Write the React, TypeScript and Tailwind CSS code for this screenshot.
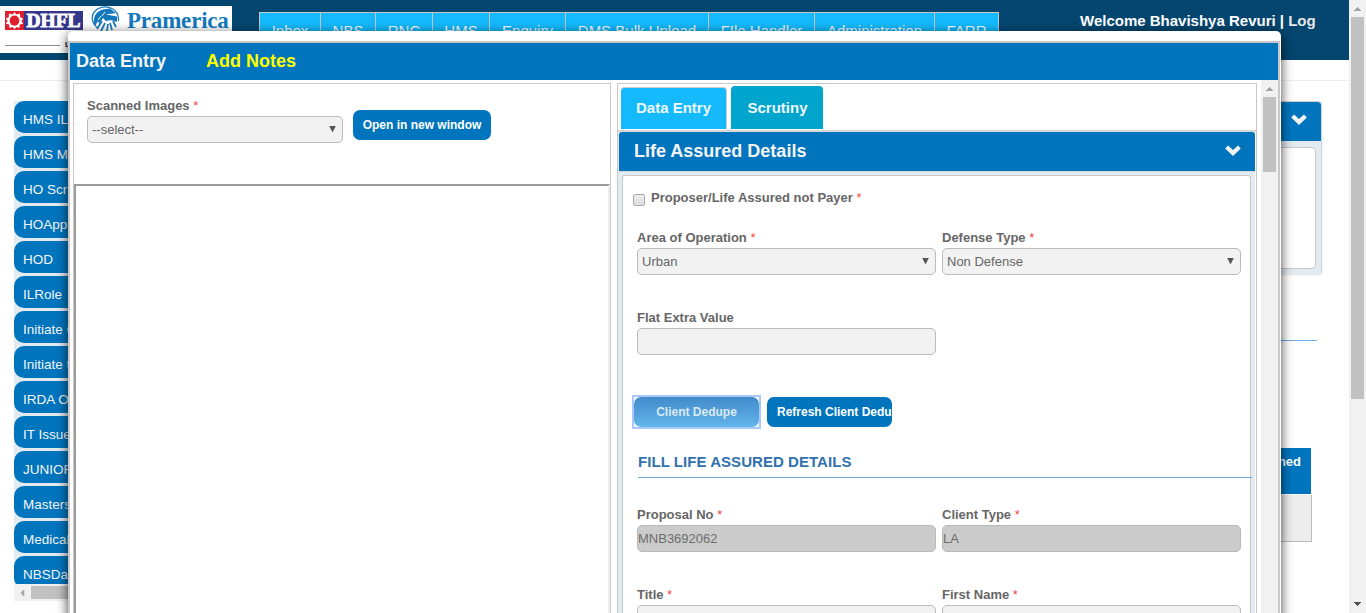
import React from "react";

const navItems = [
  { label: "Inbox", width: "w-[61px]" },
  { label: "NBS", width: "w-[55px]" },
  { label: "RNC", width: "w-[57px]" },
  { label: "HMS", width: "w-[57px]" },
  { label: "Enquiry", width: "w-[76px]" },
  { label: "DMS Bulk Upload", width: "w-[143px]" },
  { label: "FIle Handler", width: "w-[106px]" },
  { label: "Administration", width: "w-[120px]" },
  { label: "FARR", width: "w-[64px]" },
];

const roles = [
  "HMS IL",
  "HMS Maker",
  "HO Scrutiny",
  "HOApprover",
  "HOD",
  "ILRole",
  "Initiate Claim",
  "Initiate task",
  "IRDA Officer",
  "IT Issues",
  "JUNIOR",
  "Masters",
  "Medical",
  "NBSDataEntry",
];

function Chevron() {
  return (
    <svg width="16" height="11" viewBox="0 0 16 11" className="shrink-0" aria-hidden="true">
      <path d="M0.2 3.4 L3 0.4 L8 5 L13 0.4 L15.8 3.4 L8 11 Z" fill="#f4f4f4" />
    </svg>
  );
}

function Arrow({ className }: { className: string }) {
  return (
    <svg width="7" height="4" viewBox="0 0 7 4" className={className} aria-hidden="true">
      <path d="M3 0h1v1h1v1h1v1h1v1H0V3h1V2h1V1h1z" fill="currentColor" />
    </svg>
  );
}

function Logo() {
  return (
    <div className="h-[47px] w-[232px] bg-white pl-[5px]">
      <div className="flex h-[25px]">
        <div className="mt-[5px] flex h-[19px] w-[78px]">
          <svg width="19" height="19" viewBox="0 0 20 19" preserveAspectRatio="none" aria-hidden="true">
            <rect width="20" height="19" fill="#e01f2d" />
            <path
              d="M10 1l2 2.6 3.800-1 .1 3.600 3.300 1.300-1.900 2.300 1.700 3-3.400.7-.6 3.500-3-1.100L10 18.200l-2.100-2.300-3 1.100-.6-3.500-3.400-.7 1.800-3L.8 7.500 4 6.200l.2-3.600L8 3.600z"
              fill="#fff"
            />
            <circle cx="10" cy="9.600" r="5.100" fill="#e01f2d" />
          </svg>
          <svg width="59" height="19" viewBox="0 0 59 19" aria-hidden="true">
            <rect width="59" height="19" fill="#34378b" />
            <text
              x="2.5"
              y="16"
              textLength="54"
              lengthAdjust="spacingAndGlyphs"
              fill="#fff"
              stroke="#fff"
              strokeWidth="0.9"
              className="font-['Liberation_Serif'] text-[19px] font-bold"
            >
              DHFL
            </text>
          </svg>
        </div>
        <svg width="30" height="26" viewBox="0 0 30 26" className="ml-[7px]" aria-hidden="true">
          <path d="M8 22C2 18 0 10 5 5C9 .8 16-.5 22 2.500C26 4.500 28.800 9 28.500 15" fill="none" stroke="#1379bd" strokeWidth="1.200" />
          <path d="M4 17C3 10 7 5 13 3.500L20 2.500L26 7L16 8.500L27 10.500L27 16L21 14L16 15L13 12L9 18L8 15L5 20z" fill="#1379bd" />
          <path d="M12 10l3-4M8 14l3-4" stroke="#fff" strokeWidth="1" />
          <path d="M7 23l5-8M11 25l4-8M17 25l1-7M22 24l-2-7M26 21l-3-6" stroke="#1379bd" strokeWidth="1.700" fill="none" />
        </svg>
        <span className="ml-[7px] mt-px whitespace-nowrap font-['Liberation_Serif'] text-[23px] font-bold leading-[28px] tracking-[-0.2px] text-[#1379bd]">
          Pramerica
        </span>
      </div>
      <div className="mt-[8px] flex items-center">
        <div className="h-px w-[55px] bg-[#8b8b8b]" />
        <span className="ml-[5px] text-[8px] font-bold leading-[12px] text-[#222]">LIFE INSURANCE</span>
      </div>
    </div>
  );
}

function Label({ text, required = true }: { text: string; required?: boolean }) {
  return (
    <div className="h-[21px] whitespace-nowrap text-[13px] font-bold leading-[22px] text-[#666]">
      {text}
      {required && <span className="font-normal text-[#f0483e]"> *</span>}
    </div>
  );
}

function SelectBox({ value }: { value: string }) {
  return (
    <div className="flex h-[27px] items-center justify-between rounded-[5px] border border-[#bbb] bg-[#f2f2f2] pl-1 pr-[6px] text-[13px] text-[#666]">
      <span>{value}</span>
      <svg width="7" height="7" viewBox="0 0 7 7" className="mb-px" aria-hidden="true">
        <path d="M0.200 0h6.600L3.500 6.500z" fill="#555" />
      </svg>
    </div>
  );
}

function TextBox({ value = "", disabled = false }: { value?: string; disabled?: boolean }) {
  return (
    <div
      className={
        disabled
          ? "flex h-[27px] items-center rounded-[5px] border border-[#b9b9b9] bg-[#cbcbcb] text-[13px] text-[#6d6d6d]"
          : "flex h-[27px] items-center rounded-[5px] border border-[#bbb] bg-[#f2f2f2] text-[13px] text-[#666]"
      }
    >
      {value}
    </div>
  );
}

function PageBackground() {
  return (
    <div className="flex h-[613px] w-[1349px] flex-col bg-white">
      <header className="flex h-[60px] shrink-0 bg-[#04466f] pt-[6px]">
        <Logo />
        <nav className="ml-[27px] mt-[6px] flex h-[36px] border-l border-[#c8c8c8]">
          {navItems.map((n) => (
            <div
              key={n.label}
              className={`${n.width} shrink-0 whitespace-nowrap border-r border-t border-[#c8c8c8] bg-[#14bafc] text-center text-[15px] leading-[36px] text-[#eef8fd]`}
            >
              {n.label}
            </div>
          ))}
        </nav>
        <div className="ml-[81px] mt-[6px] whitespace-nowrap text-[15px] font-bold leading-[18px] text-white">
          Welcome Bhavishya Revuri | <span className="text-[#e6e6e6]">Log</span>
        </div>
      </header>
      <div className="h-[21px] shrink-0 border-b border-[#eee]" />
      <div className="flex justify-between pl-[14px] pt-5">
        <aside className="w-[200px]">
          <div className="flex h-[483px] flex-col gap-[3px] overflow-hidden bg-[#e2eaf2]">
            {roles.map((r) => (
              <div
                key={r}
                className="h-8 shrink-0 rounded-[10px] bg-[#0075be] pl-[9px] text-[13.5px] leading-[37px] text-[#f4f4f4]"
              >
                {r}
              </div>
            ))}
          </div>
          <div className="flex h-[17px] items-center bg-[#f1f1f1] pl-[5px]">
            <Arrow className="-rotate-90 text-[#a3a3a3]" />
            <div className="ml-[5px] h-[13px] flex-1 bg-[#c1c1c1]" />
          </div>
        </aside>
        <section className="mr-[27px] w-[80px]">
          <div className="h-[173px] rounded-[4px] border-r border-[#d0d6dc] bg-[#e2eaf2] shadow-sm">
            <div className="flex h-[40px] items-center justify-end rounded-tr-[4px] border-t border-[#d0d0d0] bg-[#0075be] pr-[14px] pb-[5px]">
              <Chevron />
            </div>
            <div className="mr-[5px] mt-[6px] h-[122px] rounded-r-[4px] border border-[#c4c8cc] bg-white" />
          </div>
          <div className="mr-[5px] h-[67px] border-b border-[#6aaee6]" />
          <div className="mr-[11px] mt-[107px] h-[46px] bg-[#0075be] pr-[10px] pt-[6px] text-right text-[13px] font-bold leading-[15px] text-white">
            Assigned
          </div>
          <div className="mr-[10px] mt-px h-[47px] border-b border-r border-[#bbb] bg-[#ededed]" />
        </section>
      </div>
    </div>
  );
}

function DetailsPanel() {
  return (
    <div className="h-[530px] w-[640px] border border-b-0 border-[#c8c8c8] bg-white">
      <div className="flex h-[46px] items-start gap-[4px] pl-[3px] pt-[2px]">
        <div className="mt-px flex h-[42px] w-[106px] items-center justify-center rounded-t-[4px] border-r border-t border-[#ccc] bg-[#14bafc] text-[15px] font-bold text-[#eef8fd]">
          Data Entry
        </div>
        <div className="flex h-[43px] w-[92px] items-center justify-center rounded-t-[4px] bg-[#00a5cd] pl-px pt-px text-[15px] font-bold text-[#eef8fd]">
          Scrutiny
        </div>
      </div>
      <div className="h-[483px] border-t-2 border-[#d8d8d8]">
        <div className="mr-px h-full bg-[#e2eaf2]">
          <div className="ml-px flex h-[39px] items-center justify-between rounded-t-[3px] bg-[#0075be] pl-[15px] pr-[14px] text-lg font-bold text-[#f4f4f4]">
            <span className="pb-px">Life Assured Details</span>
            <div className="pb-[3px]">
              <Chevron />
            </div>
          </div>
          <div className="h-1 border-t border-[#d2d8de]" />
          <div className="ml-1 mr-1 flex h-[440px] flex-col rounded-tl-[3px] rounded-tr-[3px] border border-b-0 border-[#c8c8c8] bg-white pl-[10px] pt-[10px]">
            <div className="flex h-[22px] shrink-0 items-center">
              <div className="mt-[5px] h-3 w-3 rounded-[2px] border border-[#aaa] bg-linear-to-b from-[#eee] to-[#ddd]" />
              <div className="ml-[6px]">
                <Label text="Proposer/Life Assured not Payer" />
              </div>
            </div>
            <div className="ml-1 mt-[19px] grid w-[604px] shrink-0 grid-cols-2 gap-x-[6px]">
              <div>
                <Label text="Area of Operation" />
                <SelectBox value="Urban" />
              </div>
              <div>
                <Label text="Defense Type" />
                <SelectBox value="Non Defense" />
              </div>
              <div className="mt-[32px]">
                <Label text="Flat Extra Value" required={false} />
                <TextBox />
              </div>
            </div>
            <div className="mt-[40px] flex h-[34px] shrink-0 gap-[6px]">
              <div className="-ml-px h-[34px] w-[129px] shrink-0 border-2 border-[#a6c8fa]">
                <div className="h-[30px] rounded-[7px] bg-linear-to-b from-[#428bca] to-[#62b5ec] text-center text-xs font-bold leading-[30px] text-[#dbe8f3]">
                  Client Dedupe
                </div>
              </div>
              <div className="mt-[2px] h-[30px] w-[125px] overflow-hidden whitespace-nowrap rounded-[7px] bg-[#0075be] pl-[10px] text-xs font-bold leading-[30px] text-white">
                Refresh Client Dedupe
              </div>
            </div>
            <div className="-mr-[2px] ml-[5px] mt-[17px] h-[32px] shrink-0 border-b border-[#6aaee0] text-[15px] font-bold leading-[32px] tracking-[0.05px] text-[#3172ad]">
              FILL LIFE ASSURED DETAILS
            </div>
            <div className="ml-1 mt-[26px] grid w-[604px] shrink-0 grid-cols-2 gap-x-[6px] gap-y-[32px]">
              <div>
                <Label text="Proposal No" />
                <TextBox value="MNB3692062" disabled />
              </div>
              <div>
                <Label text="Client Type" />
                <TextBox value="LA" disabled />
              </div>
              <div>
                <Label text="Title" />
                <TextBox />
              </div>
              <div>
                <Label text="First Name" />
                <TextBox />
              </div>
            </div>
          </div>
        </div>
      </div>
    </div>
  );
}

function EntryModal() {
  return (
    <div className="absolute left-[68px] top-[31px] h-[600px] w-[1213px] rounded-[5px] bg-white pr-px pt-[10px] shadow-[0_3px_12px_rgba(0,0,0,0.75)]">
      <div className="h-full border-2 border-[#c8c8c8]">
        <div className="flex h-[37px] gap-[40px] bg-[#0075be] pl-[6px] text-lg font-bold leading-[36px] text-[#f4f4f4]">
          <span>Data Entry</span>
          <span className="text-[#ffff00]">Add Notes</span>
        </div>
        <div className="flex h-[533px] pl-[3px]">
          <div className="mt-[3px] flex h-[530px] w-[538px] flex-col border border-b-0 border-[#c8c8c8]">
            <div className="flex h-[100px] shrink-0 pl-[13px] pt-[10px]">
              <div className="w-[256px] pt-px">
                <Label text="Scanned Images" />
                <SelectBox value="--select--" />
              </div>
              <div className="ml-[10px] mt-4 h-[30px] w-[138px] rounded-[7px] bg-[#0075be] text-center text-xs font-bold leading-[30px] text-white">
                Open in new window
              </div>
            </div>
            <div className="flex-1 border-2 border-b-0 border-[#9a9a9a] border-r-[#eee]" />
          </div>
          <div className="ml-[6px] mt-[3px]">
            <DetailsPanel />
          </div>
          <div className="ml-auto flex w-[17px] flex-col items-center bg-[#f1f1f1] pt-[7px]">
            <Arrow className="text-[#a3a3a3]" />
            <div className="mt-[6px] h-[75px] w-[13px] bg-[#c1c1c1]" />
          </div>
        </div>
      </div>
    </div>
  );
}

export default function App() {
  return (
    <div className="relative flex h-[613px] w-[1366px] overflow-hidden bg-white font-['Liberation_Sans',Arial,sans-serif]">
      <PageBackground />
      <EntryModal />
      <div className="flex w-[17px] flex-col items-center bg-[#f1f1f1] pb-[7px] pt-[7px]">
        <Arrow className="text-[#a3a3a3]" />
        <div className="mt-[6px] h-[382px] w-[13px] bg-[#c1c1c1]" />
        <Arrow className="mt-auto rotate-180 text-[#505050]" />
      </div>
    </div>
  );
}
